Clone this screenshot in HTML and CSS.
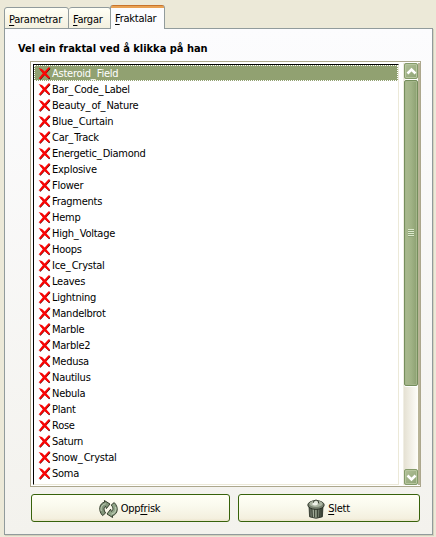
FILE: index.html
```
<!DOCTYPE html>
<html lang="nn">
<head>
<meta charset="utf-8">
<title>Fraktalar</title>
<link rel="stylesheet" href="styles.css">
</head>
<body>
<svg width="0" height="0" class="defs">
  <symbol id="cross" viewBox="0 0 13 13">
    <path d="M2.6 2.6 L11.6 11.8 M12 1.4 L2 12.4" stroke="#3a0000" stroke-width="1.4" fill="none"/>
    <path d="M.6 1 L4 2 L6.6 4.6 L10.6 .2 L12.2 .8 L8.2 6.2 L12 10.6 L10.4 11.4 L6.4 7.9 L2.6 12 L.6 11.4 L4.8 6.3 Z" fill="#fb0505"/>
  </symbol>
</svg>
<nav class="tabs">
  <div class="tab t1"><span><u>P</u>arametrar</span></div>
  <div class="tab t2"><span><u>F</u>argar</span></div>
  <div class="tab active"><span><u>F</u>raktalar</span></div>
</nav>
<main class="panel">
  <h1><span>Vel ein fraktal ved å klikka på han</span></h1>
  <div class="frame">
    <ul class="list" id="list"></ul>
    <div class="scroll">
      <div class="sbtn"><svg width="11" height="9" viewBox="0 0 11 9"><path d="M1.5 6.5 L5.5 2.5 L9.5 6.5" fill="none" stroke="#fff" stroke-width="2.5"/></svg></div>
      <div class="thumb"><i></i></div>
      <div class="track"></div>
      <div class="sbtn"><svg width="11" height="9" viewBox="0 0 11 9"><path d="M1.5 2.5 L5.5 6.5 L9.5 2.5" fill="none" stroke="#fff" stroke-width="2.5"/></svg></div>
    </div>
  </div>
  <div class="buttons">
    <button class="b1">
      <svg width="19" height="18" viewBox="0 0 19 18">
        <g stroke="#26301f" stroke-width=".9" stroke-linejoin="round">
          <path d="M3.6 15.6 C-.8 11 -.2 3.5 5.6 2.1 L5.4 .5 L11 4 L7.4 8.6 L6.6 6.4 C4.6 7.4 4.6 10.4 6.6 13 Z" fill="#82967a"/>
          <path d="M15.2 2.6 C19.8 7 19.2 14 13.4 15.7 L13.6 17.5 L8 14 L11.6 9.2 L12.4 11.4 C14.4 10.4 14.4 7.4 12.2 5 Z" fill="#91a689"/>
        </g>
        <path d="M2.2 11 C1.4 7.5 3 4.6 6.6 3.8 M16.7 7 C17.4 10.5 16 13 12.6 14" fill="none" stroke="#cbd8c2" stroke-width="1"/>
      </svg>
      <span>Opp<u>fr</u>isk</span>
    </button>
    <button class="b2">
      <svg width="18" height="20" viewBox="0 0 18 20">
        <defs><linearGradient id="can"><stop offset="0" stop-color="#3d4439"/><stop offset=".35" stop-color="#a9b3a0"/><stop offset=".65" stop-color="#747e6d"/><stop offset="1" stop-color="#242a21"/></linearGradient></defs>
        <path d="M2 7 L2.6 17.8 Q9 20.8 15.4 17.8 L16 7 Z" fill="url(#can)" stroke="#262c22" stroke-width=".8"/>
        <path d="M4.8 9.5 L5.4 18 M7.6 10 V18.5 M10.4 10 V18.5 M13.2 9.5 L12.6 18" stroke="#394033" stroke-width="1"/>
        <ellipse cx="9" cy="6" rx="8.2" ry="4.4" fill="#798271" stroke="#252b20" stroke-width=".9"/>
        <ellipse cx="9" cy="4.8" rx="6.6" ry="3.2" fill="#aab4a1"/>
        <path d="M6.2 4.5 Q6.2 1 9 1 Q11.8 1 11.8 4.5" fill="#dce2d4" stroke="#30372a" stroke-width="1"/>
        <ellipse cx="8" cy="5" rx="2.8" ry="1.4" fill="#eef1e8"/>
      </svg>
      <span><u>S</u>lett</span>
    </button>
  </div>
</main>
<script src="list.js"></script>
</body>
</html>
```
FILE: styles.css
```
* { box-sizing: border-box; }
body { margin: 0; width: 436px; height: 537px; overflow: hidden; background: #ece9d8; padding: 5px 3px 2px 4px; font: 11px/16px "DejaVu Sans Condensed", "DejaVu Sans", sans-serif; font-stretch: condensed; letter-spacing: -.25px; color: #000; }
.defs { position: absolute; }
u { text-underline-offset: 2px; text-decoration-thickness: 1px; text-decoration-skip-ink: none; }
.tabs { display: flex; align-items: flex-end; height: 24px; position: relative; }
.tab { height: 22px; border: 1px solid #919b9c; border-radius: 3px 3px 0 0; background: linear-gradient(#fffff6, #f3f0df); padding: 4px 0 0 4px; white-space: nowrap; }
.t1 { width: 65px; }
.t2 { width: 42px; border-left: 0; }
.tab.active { width: 55px; margin-left: -1px; height: 24px; border-top: 0; border-bottom: 0; background: linear-gradient(#c8742c 0 1px, #e9a153 1px 3px, #fcfcfe 3px); padding-top: 6px; }
.panel { width: 429px; height: 507px; margin-top: -1px; border: 1px solid #919b9c; background: linear-gradient(#fcfcfe, #f3f2ed); box-shadow: 1px 1px #d5d1bd; padding: 12px 11px 0 25px; }
h1 { margin: 0 0 4px -12px; font-size: 11px; line-height: 16px; height: 16px; font-weight: bold; letter-spacing: -.02px; white-space: nowrap; }
.frame { width: 391px; height: 426px; border: 1px solid #aca78d; display: flex; justify-content: space-between; padding: 1px 0 0 1px; background: #fff; }
.list { list-style: none; margin: 1px 0 0 1px; padding: 0; width: 366px; height: 421px; border: 1px solid; border-color: #000 #ece9d8 #ece9d8 #000; background: #fff; overflow: hidden; }
.list li { height: 16px; display: flex; align-items: center; gap: 1px; padding-left: 4px; white-space: nowrap; }
.list span { position: relative; top: 1px; }
.list span b { font-weight: normal; letter-spacing: 1px; }
.list svg { width: 13px; height: 13px; flex: none; }
.list .sel { background: #91a171; color: #fff; outline: 1px dotted #fff; outline-offset: -1px; }
.scroll { width: 17px; height: 422px; display: flex; flex-direction: column; background: linear-gradient(90deg, #e5e1d3, #fefef9); border-right: 2px solid #b8b496; border-left: 1px solid #f0eee4; }
.sbtn { height: 16px; border: 1px solid #849b6a; box-shadow: inset 0 0 0 1px #b7c69f; background: linear-gradient(135deg, #b2c198, #8da275); border-radius: 2px; display: flex; align-items: center; justify-content: center; }
.thumb { height: 306px; margin-top: 1px; border: 1px solid #758e5c; box-shadow: inset 0 0 0 1px #a4b58a, 0 -1px #fff, 0 1px #fff; background: linear-gradient(90deg, #a9b98e, #a1b386 50%, #8ca071); border-radius: 2px; display: flex; align-items: center; justify-content: center; }
.thumb i { width: 6px; height: 8px; background: repeating-linear-gradient(#dde9cc 0 1px, #8ba275 1px 2px); }
.track { flex: 1; }
.buttons { display: flex; gap: 8px; margin: 7px 0 0 0; }
button { height: 28px; margin: 0; padding: 1px 0 0; border: 1px solid #37620b; border-radius: 3px; background: linear-gradient(#fffff6, #fafaee 40%, #f4f0df 90%, #ece5cc); font: inherit; letter-spacing: inherit; color: #000; display: flex; align-items: center; justify-content: center; gap: 3px; }
.b1 { width: 199px; padding-right: 2px; margin-left: 1px; }
.b2 { width: 182px; padding-right: 1px; }
```
FILE: list.js
```
const names = ["Asteroid_Field","Bar_Code_Label","Beauty_of_Nature","Blue_Curtain","Car_Track","Energetic_Diamond","Explosive","Flower","Fragments","Hemp","High_Voltage","Hoops","Ice_Crystal","Leaves","Lightning","Mandelbrot","Marble","Marble2","Medusa","Nautilus","Nebula","Plant","Rose","Saturn","Snow_Crystal","Soma"];
document.getElementById("list").innerHTML = names.map((name, i) =>
  `<li${i === 0 ? ' class="sel"' : ''}><svg><use href="#cross"/></svg><span>${name.replace(/_/g, "<b>_</b>")}</span></li>`).join("");
```
